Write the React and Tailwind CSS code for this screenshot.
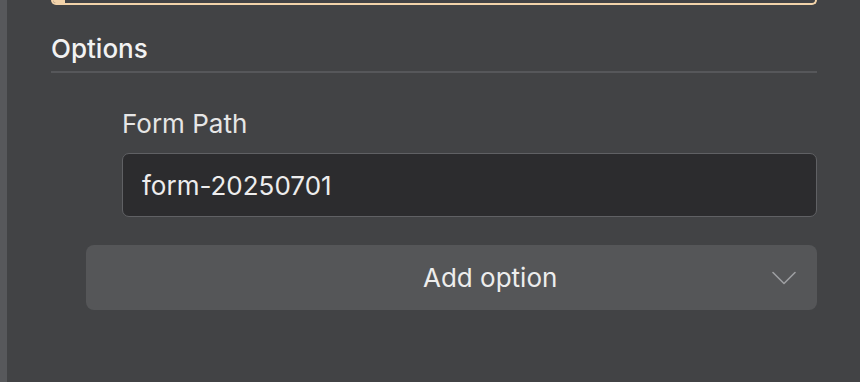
import React from 'react';

const ChevronDown = () => (
  <svg width="24" height="14" viewBox="0 0 24 14" fill="none">
    <path d="M1 1.5L12 12.5L23 1.5" stroke="#9d9ea1" strokeWidth="1.6" strokeLinecap="round" strokeLinejoin="round" />
  </svg>
);

export default function App() {
  return (
    <div className="flex h-[382px] w-[860px] overflow-hidden bg-[#424345] font-['Inter',sans-serif] text-[#ececec]">
      {/* side rail */}
      <div className="w-[7px] shrink-0 bg-[#57585b]" />

      <div className="flex flex-1 flex-col pl-[44px] pr-[43px]">
        {/* bottom edge of the card above */}
        <div className="flex h-[5px] w-full overflow-hidden rounded-b-[6px] border-2 border-t-0 border-[#f2d3aa]">
          <div className="h-full w-[12px] bg-[#f2d3aa]" />
        </div>

        {/* Options section */}
        <div className="mt-[28px] border-b-2 border-[#56575a] pb-[6px]">
          <h2 className="text-[26px] font-medium leading-[32px] text-[#f2f2f2]">Options</h2>
        </div>

        <div className="mt-[35px] pl-[71px]">
          <label className="block text-[26px] leading-[32px] text-[#e6e6e6]">Form Path</label>
          <div className="mt-[13px] flex h-[64px] items-center rounded-[7px] border border-[#606164] bg-[#2c2c2e] px-[19px]">
            <span className="text-[26px] text-[#ededed]">form-20250701</span>
          </div>
        </div>

        <button
          type="button"
          className="mt-[28px] ml-[35px] flex h-[65px] items-center rounded-[8px] bg-[#555658] pr-[21px]"
        >
          <span className="ml-[337px] text-[26px] text-[#ededed]">Add option</span>
          <span className="ml-auto flex items-center">
            <ChevronDown />
          </span>
        </button>
      </div>
    </div>
  );
}
